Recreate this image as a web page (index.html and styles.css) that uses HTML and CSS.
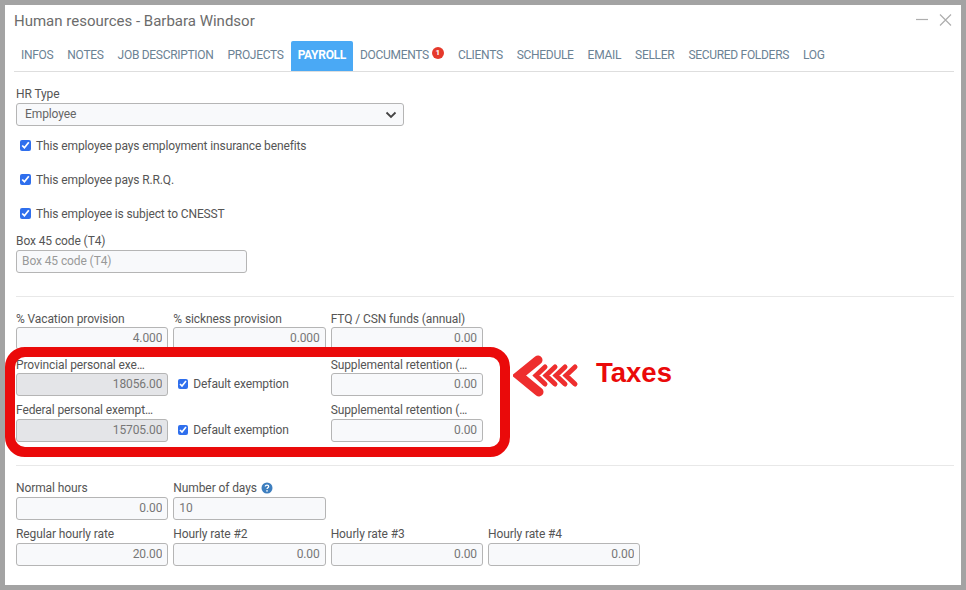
FILE: index.html
```html
<!DOCTYPE html>
<html lang="en">
<head>
<meta charset="utf-8">
<title>Human resources - Barbara Windsor</title>
<link rel="stylesheet" href="styles.css">
</head>
<body>
<main class="window">
  <header class="titlebar">
    <h1 class="title">Human resources - Barbara Windsor</h1>
    <div class="window-actions">
      <svg class="win-icon" width="16" height="16" viewBox="0 0 16 16"><path d="M0 6.500h12" stroke="#aeaeae" stroke-width="1.200" fill="none"/></svg>
      <svg class="win-icon" width="14" height="14" viewBox="0 0 14 14"><path d="M2 .5l11 11M13 .5l-11 11" stroke="#aeaeae" stroke-width="1.200" fill="none"/></svg>
    </div>
  </header>
  <nav class="tabs">
    <a class="tab">INFOS</a>
    <a class="tab">NOTES</a>
    <a class="tab">JOB DESCRIPTION</a>
    <a class="tab">PROJECTS</a>
    <a class="tab active">PAYROLL</a>
    <a class="tab">DOCUMENTS<span class="badge">1</span></a>
    <a class="tab">CLIENTS</a>
    <a class="tab">SCHEDULE</a>
    <a class="tab">EMAIL</a>
    <a class="tab">SELLER</a>
    <a class="tab">SECURED FOLDERS</a>
    <a class="tab">LOG</a>
  </nav>
  <form class="form">
    <label class="label">HR Type</label>
    <div class="select">Employee
      <svg width="12" height="8" viewBox="0 0 12 8"><path d="M1.500 1.500L6 6l4.500-4.500" stroke="#444" stroke-width="1.800" fill="none"/></svg>
    </div>
    <div class="checks">
      <label class="check"><input type="checkbox" checked>This employee pays employment insurance benefits</label>
      <label class="check"><input type="checkbox" checked>This employee pays R.R.Q.</label>
      <label class="check"><input type="checkbox" checked>This employee is subject to CNESST</label>
    </div>
    <label class="label">Box 45 code (T4)</label>
    <input class="input box45" placeholder="Box 45 code (T4)">
    <hr class="rule first">
    <div class="grid upper">
      <div class="field"><label class="label">% Vacation provision</label><input class="input num" value="4.000"></div>
      <div class="field"><label class="label">% sickness provision</label><input class="input num" value="0.000"></div>
      <div class="field"><label class="label">FTQ / CSN funds (annual)</label><input class="input num" value="0.00"></div>
      <div class="field"></div>
      <div class="field"><label class="label">Provincial personal exe…</label><input class="input num locked" value="18056.00"></div>
      <div class="field default"><label class="check tight"><input type="checkbox" checked>Default exemption</label></div>
      <div class="field"><label class="label">Supplemental retention (…</label><input class="input num" value="0.00"></div>
      <div class="field"></div>
      <div class="field"><label class="label">Federal personal exempt…</label><input class="input num locked" value="15705.00"></div>
      <div class="field default"><label class="check tight"><input type="checkbox" checked>Default exemption</label></div>
      <div class="field"><label class="label">Supplemental retention (…</label><input class="input num" value="0.00"></div>
    </div>
    <hr class="rule">
    <div class="grid">
      <div class="field"><label class="label">Normal hours</label><input class="input num" value="0.00"></div>
      <div class="field"><label class="label">Number of days<svg class="help" width="12" height="12" viewBox="0 0 12 12"><circle cx="6" cy="6" r="5.500" fill="#3d7ebf"/><path d="M4.300 4.600c0-1 .8-1.500 1.700-1.500s1.700.5 1.700 1.400c0 1.200-1.700 1.200-1.700 2.500" stroke="#fff" stroke-width="1.300" fill="none"/><circle cx="6" cy="8.900" r=".8" fill="#fff"/></svg></label><input class="input" value="10"></div>
      <div class="field"></div>
      <div class="field"></div>
      <div class="field"><label class="label">Regular hourly rate</label><input class="input num" value="20.00"></div>
      <div class="field"><label class="label">Hourly rate #2</label><input class="input num" value="0.00"></div>
      <div class="field"><label class="label">Hourly rate #3</label><input class="input num" value="0.00"></div>
      <div class="field"><label class="label">Hourly rate #4</label><input class="input num" value="0.00"></div>
    </div>
  </form>
</main>
<div class="callout-box"></div>
<svg class="callout-arrow" width="66" height="44" viewBox="0 0 66 44">
  <path d="M25 5L6 20.500L26 37" stroke="#ee2e2e" stroke-width="9" stroke-linecap="round" fill="none"/>
  <path d="M32 12L23 20.500L32 29M42 12L33 20.500L42 29M52 12L43 20.500L52 29M62 12L53 20.500L62 29" stroke="#ee2e2e" stroke-width="5" stroke-linecap="round" fill="none"/>
</svg>
<div class="callout-text">Taxes</div>
</body>
</html>
```
FILE: styles.css
```css
* { box-sizing: border-box; }
html, body { margin: 0; height: 100%; }
body {
  background: #a3a3a3;
  padding: 5px;
  font-family: Roboto, "Liberation Sans", sans-serif;
  overflow: hidden;
  position: relative;
}
.window {
  background: #fff;
  height: 580px;
  width: 956px;
  padding: 0 7px 0 9px;
}
.titlebar {
  display: flex;
  justify-content: space-between;
  align-items: center;
  height: 32px;
}
.title {
  margin: 0;
  font-size: 15px;
  font-weight: 400;
  color: #6c6c6c;
}
.window-actions { display: flex; align-items: center; gap: 6px; margin-right: 2px; }
.win-icon { display: block; }
.tabs {
  display: flex;
  height: 35px;
  padding-top: 4px;
  border-bottom: 1px solid #dedede;
}
.tab {
  display: flex;
  align-items: center;
  padding: 0 7px 2px;
  font-size: 12px;
  letter-spacing: -0.3px;
  color: #6b8294;
}
.tab.active {
  background: #4aa9f5;
  color: #fff;
  font-weight: 700;
  border-radius: 2px 2px 0 0;
}
.badge {
  width: 12px;
  height: 12px;
  margin: -4px 0 0 3px;
  border-radius: 50%;
  background: #e5392b;
  color: #fff;
  font-size: 8px;
  font-weight: 700;
  letter-spacing: 0;
  line-height: 12px;
  text-align: center;
}
.form { padding: 13px 0 0 2px; }
.label {
  display: block;
  height: 18px;
  font-size: 12px;
  letter-spacing: -0.1px;
  line-height: 18px;
  color: #555;
  white-space: nowrap;
}
.upper .field:nth-child(-n+8) .label { line-height: 20px; }
.help { vertical-align: -2px; margin-left: 4px; }
.select {
  display: flex;
  justify-content: space-between;
  align-items: center;
  width: 388px;
  height: 23px;
  padding: 0 6px 2px 8px;
  background: #f8f9fb;
  border: 1px solid #b5b5b5;
  border-radius: 3px;
  font-size: 12px;
  letter-spacing: -0.1px;
  color: #666;
}
.select svg { margin-top: 2px; }
.checks { padding-top: 9px; }
.check {
  display: flex;
  align-items: center;
  height: 20px;
  margin-bottom: 14px;
  padding: 2px 0 0 4px;
  font-size: 12px;
  letter-spacing: -0.12px;
  color: #555;
  white-space: nowrap;
}
.check input {
  width: 11px;
  height: 11px;
  margin: 0 5px 2px 0;
  accent-color: #2f6fed;
}
.checks .check:last-child { margin-bottom: 9px; }
.input {
  display: block;
  width: 100%;
  height: 23px;
  padding: 0 5px 2px 5px;
  background: #f8f9fb;
  border: 1px solid #b5b5b5;
  border-radius: 3px;
  outline: 0;
  font-family: inherit;
  font-size: 12px;
  letter-spacing: -0.1px;
  color: #777;
}
.input::placeholder { color: #999; }
.box45 { width: 231px; }
.num { text-align: right; }
.locked { background: #e4e5e8; }
.rule {
  height: 1px;
  margin: 23px 0 13px;
  border: 0;
  background: #e8e8e8;
}
.rule.first { margin-bottom: 12px; }
.grid {
  display: grid;
  grid-template-columns: repeat(4, 152.330px);
  column-gap: 5px;
  row-gap: 5px;
  grid-auto-rows: 41px;
}
.default { display: flex; align-items: flex-end; }
.check.tight { margin: 0 0 2px; padding: 0 0 0 5px; }
.tight input { width: 10px; height: 10px; margin: 0 5px 0 0; }
.callout-box {
  position: absolute;
  left: 5px;
  top: 347px;
  width: 505px;
  height: 110px;
  border: 10px solid #ea0a0a;
  border-radius: 20px;
}
.callout-arrow {
  position: absolute;
  left: 513px;
  top: 355px;
}
.callout-text {
  position: absolute;
  left: 596px;
  top: 356px;
  font-family: "Liberation Sans", sans-serif;
  font-size: 27.500px;
  font-weight: 700;
  line-height: 34px;
  color: #ea0a0a;
}
```
